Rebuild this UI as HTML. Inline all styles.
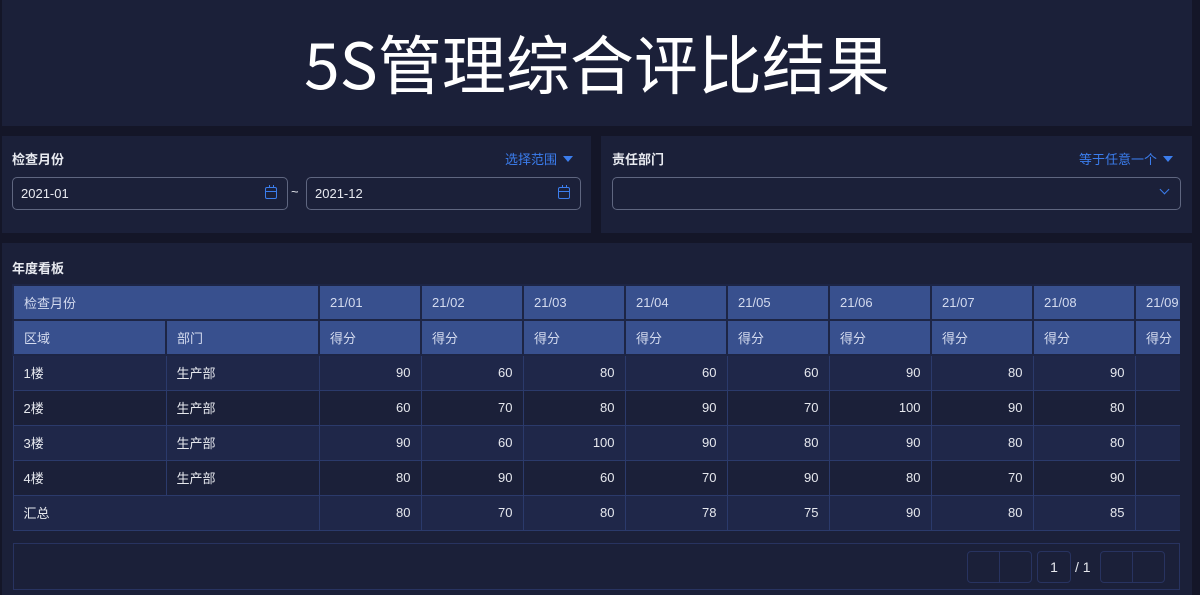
<!DOCTYPE html>
<html><head><meta charset="utf-8"><style>
*{margin:0;padding:0;box-sizing:border-box}
body{width:1200px;height:595px;background:#141628;font-family:"Liberation Sans","Noto Sans CJK SC",sans-serif;color:#e6e8ee;position:relative;overflow:hidden}
.p{position:absolute;background:#1b2039}
.title{left:2px;top:0;width:1190px;height:126px;text-align:center;font-size:64px;line-height:124px;color:#fff;font-family:"Noto Sans CJK SC",sans-serif;font-weight:400}
.lbl{position:absolute;font-size:13px;font-weight:bold;color:#e8eaf0}
.lnk{position:absolute;font-size:13px;color:#3b7ded}
.tri{display:inline-block;width:0;height:0;border-left:5px solid transparent;border-right:5px solid transparent;border-top:6px solid #3b7ded;margin-left:6px;vertical-align:2px}
.inp{position:absolute;height:33px;border:1px solid #5f6680;border-radius:5px;font-size:13px;line-height:31px;padding-left:8px;color:#e8eaf0}
.cal{position:absolute;right:10px;top:9px;width:12px;height:12px;border:1.5px solid #3b7ded;border-radius:2px}
.cal:before{content:"";position:absolute;left:3px;top:-3px;width:3px;height:3px;border-left:1.5px solid #3b7ded;border-right:1.5px solid #3b7ded}
.cal:after{content:"";position:absolute;left:0;right:0;top:3px;border-top:1.5px solid #3b7ded}
table{position:absolute;border-collapse:collapse;table-layout:fixed;font-size:13px;width:1223px}
td{height:35px;border:1px solid #2b3a6b;padding:0 10px;white-space:nowrap;overflow:hidden}
.h td{background:#38508e;color:#d4dbef;border-color:#1d2545;border-width:2px}
.r td{text-align:right}
.r td.l{text-align:left}
.a td{background:#1f2749}
.b td{background:#1b2039}
.clip{position:absolute;left:12px;top:284px;width:1168px;height:248px;overflow:hidden}
.clip table{left:0;top:0}
.pg{position:absolute;left:13px;top:543px;width:1167px;height:47px;border:1px solid #283360}
.btn{position:absolute;top:7px;height:32px;border:1px solid #283360;border-radius:4px}
</style></head><body>
<div class="p title">5S管理综合评比结果</div>

<div class="p" style="left:2px;top:136px;width:589px;height:97px">
<div class="lbl" style="left:10px;top:13px">检查月份</div>
<div class="lnk" style="right:18px;top:13px">选择范围<span class="tri"></span></div>
<div class="inp" style="left:10px;top:41px;width:276px">2021-01<span class="cal"></span></div>
<div style="position:absolute;left:289px;top:48px;font-size:13px">~</div>
<div class="inp" style="left:304px;top:41px;width:275px">2021-12<span class="cal"></span></div>
</div>

<div class="p" style="left:601px;top:136px;width:591px;height:97px">
<div class="lbl" style="left:11px;top:13px">责任部门</div>
<div class="lnk" style="right:19px;top:13px">等于任意一个<span class="tri"></span></div>
<div class="inp" style="left:11px;top:41px;width:569px"><span style="position:absolute;right:12px;top:8px;width:7px;height:7px;border-right:1.3px solid #3b7ded;border-bottom:1.3px solid #3b7ded;transform:rotate(45deg)"></span></div>
</div>

<div class="p" style="left:2px;top:243px;width:1190px;height:352px">
<div class="lbl" style="left:10px;top:15px">年度看板</div>
</div>
<div class="clip">
<table>
<colgroup><col style="width:153px"><col style="width:153px"><col style="width:102px"><col style="width:102px"><col style="width:102px"><col style="width:102px"><col style="width:102px"><col style="width:102px"><col style="width:102px"><col style="width:102px"><col style="width:101px"></colgroup>
<tr class="h"><td colspan="2">检查月份</td><td>21/01</td><td>21/02</td><td>21/03</td><td>21/04</td><td>21/05</td><td>21/06</td><td>21/07</td><td>21/08</td><td>21/09</td></tr>
<tr class="h"><td>区域</td><td>部门</td><td>得分</td><td>得分</td><td>得分</td><td>得分</td><td>得分</td><td>得分</td><td>得分</td><td>得分</td><td>得分</td></tr>
<tr class="r a"><td class="l">1楼</td><td class="l">生产部</td><td>90</td><td>60</td><td>80</td><td>60</td><td>60</td><td>90</td><td>80</td><td>90</td><td></td></tr>
<tr class="r b"><td class="l">2楼</td><td class="l">生产部</td><td>60</td><td>70</td><td>80</td><td>90</td><td>70</td><td>100</td><td>90</td><td>80</td><td></td></tr>
<tr class="r a"><td class="l">3楼</td><td class="l">生产部</td><td>90</td><td>60</td><td>100</td><td>90</td><td>80</td><td>90</td><td>80</td><td>80</td><td></td></tr>
<tr class="r b"><td class="l">4楼</td><td class="l">生产部</td><td>80</td><td>90</td><td>60</td><td>70</td><td>90</td><td>80</td><td>70</td><td>90</td><td></td></tr>
<tr class="r a"><td class="l" colspan="2">汇总</td><td>80</td><td>70</td><td>80</td><td>78</td><td>75</td><td>90</td><td>80</td><td>85</td><td></td></tr>
</table>
</div>
<div class="pg">
<div class="btn" style="left:953px;width:33px;border-radius:4px 0 0 4px"></div>
<div class="btn" style="left:985px;width:33px;border-radius:0 4px 4px 0"></div>
<div class="btn" style="left:1023px;width:34px;text-align:center;line-height:30px;font-size:14px">1</div>
<div style="position:absolute;left:1061px;top:15px;font-size:14px">/ 1</div>
<div class="btn" style="left:1086px;width:33px;border-radius:4px 0 0 4px"></div>
<div class="btn" style="left:1118px;width:33px;border-radius:0 4px 4px 0"></div>
</div>
</body></html>
